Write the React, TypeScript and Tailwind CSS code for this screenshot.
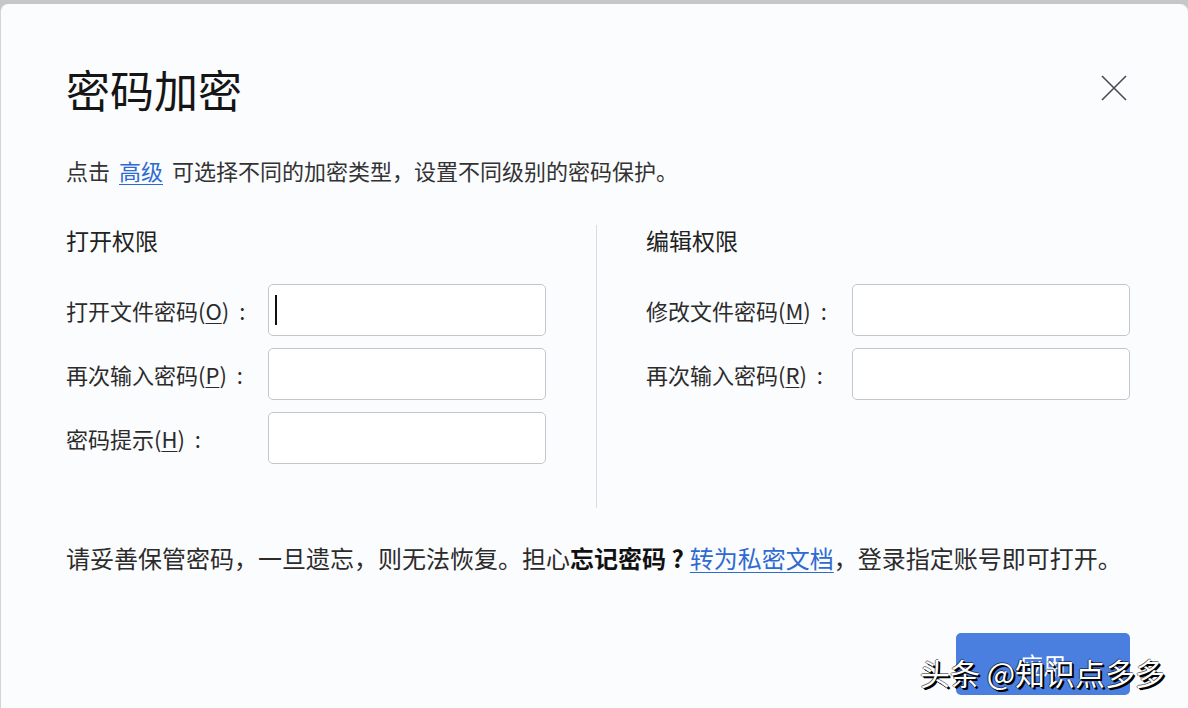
import React from "react";

const font = { fontFamily: '"Noto Sans CJK SC", "Noto Sans", sans-serif' };

function Label({ text, k, w }: { text: string; k: string; w: string }) {
  return (
    <div className={`${w} shrink-0 text-[22px] text-[#2b2b2b] leading-[30px] whitespace-nowrap`}>
      {text}(<span className="underline underline-offset-[3px] decoration-1">{k}</span>)
      <span className="inline-block w-[26px] text-center">:</span>
    </div>
  );
}

function Input({ cursor }: { cursor?: boolean }) {
  return (
    <div className="w-[278px] h-[52px] shrink-0 rounded-[5px] border border-[#c3c7cd] bg-white flex items-center pl-[6px]">
      {cursor && <span className="w-[2px] h-[30px] bg-[#111]" />}
    </div>
  );
}

export default function App() {
  return (
    <div className="w-[1188px] h-[708px] bg-[#c7c7c7] pt-[4px] overflow-hidden" style={font}>
      <div className="relative h-full bg-[#fbfcfe] rounded-t-[8px] border-l border-[#d5d5d5] pl-[65px] pr-[50px]">
        <button className="absolute left-[1099px] top-[70px] w-[28px] h-[28px] flex items-center justify-center">
          <svg width="26" height="26" viewBox="0 0 26 26">
            <path d="M1 1 L25 25 M25 1 L1 25" stroke="#4a4a55" strokeWidth="1.6" />
          </svg>
        </button>

        <div className="pt-[61px] text-[44px] leading-[48px] text-[#151515]">密码加密</div>

        <div className="mt-[42px] text-[22px] leading-[30px] text-[#333]">
          点击<a className="mx-[9px] text-[#2f6ad0] underline underline-offset-[4px] decoration-1">高级</a>可选择不同的加密类型，设置不同级别的密码保护。
        </div>

        <div className="mt-[40px] flex h-[283px]">
          <div className="w-[530px] shrink-0 flex flex-col">
            <div className="text-[23px] leading-[30px] text-[#222]">打开权限</div>
            <div className="mt-[29px] flex flex-col gap-[12px]">
              <div className="flex items-center">
                <Label text="打开文件密码" k="O" w="w-[202px]" />
                <Input cursor />
              </div>
              <div className="flex items-center">
                <Label text="再次输入密码" k="P" w="w-[202px]" />
                <Input />
              </div>
              <div className="flex items-center">
                <Label text="密码提示" k="H" w="w-[202px]" />
                <Input />
              </div>
            </div>
          </div>
          <div className="w-px shrink-0 bg-[#d9dce0]" />
          <div className="pl-[49px] shrink-0 flex flex-col">
            <div className="text-[23px] leading-[30px] text-[#222]">编辑权限</div>
            <div className="mt-[29px] flex flex-col gap-[12px]">
              <div className="flex items-center">
                <Label text="修改文件密码" k="M" w="w-[206px]" />
                <Input />
              </div>
              <div className="flex items-center">
                <Label text="再次输入密码" k="R" w="w-[206px]" />
                <Input />
              </div>
            </div>
          </div>
        </div>

        <div className="mt-[35px] text-[24px] leading-[30px] text-[#2b2b2b] whitespace-nowrap">
          请妥善保管密码，一旦遗忘，则无法恢复。担心<span className="font-bold text-[#111]">忘记密码 ?</span>
          <a className="ml-[6px] text-[#2f6ad0] underline underline-offset-[4px] decoration-1">转为私密文档</a>，登录指定账号即可打开。
        </div>

        <div className="absolute left-[955px] top-[629px] w-[174px] h-[62px] rounded-[5px] bg-[#4a7fe0] flex items-center justify-center text-white text-[23px]">
          应用
        </div>

        <div
          className="absolute left-[919px] top-[648px] text-[30px] leading-[40px] text-white whitespace-nowrap [text-shadow:2px_2px_0_#000,1px_1px_0_#000,-1px_0_0_rgba(0,0,0,0.5),0_-1px_0_rgba(0,0,0,0.5)]"
        >
          头条 @知识点多多
        </div>
      </div>
    </div>
  );
}
